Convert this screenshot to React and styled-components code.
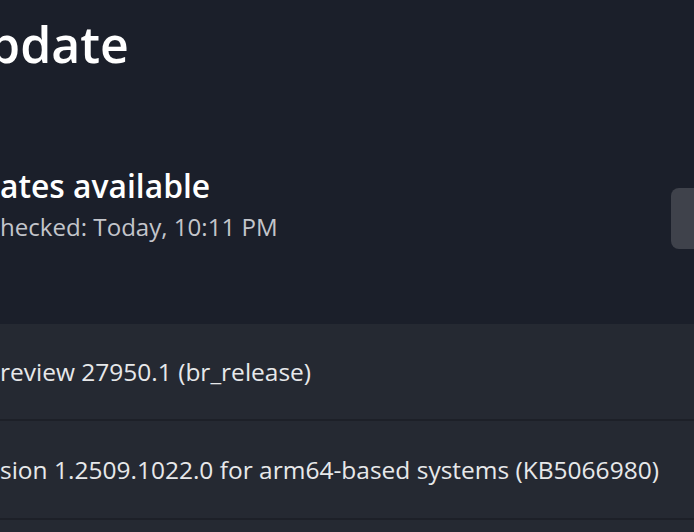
import React from "react";
import styled, { createGlobalStyle } from "styled-components";

const GlobalStyle = createGlobalStyle`
  html, body {
    margin: 0;
    padding: 0;
    background: #1b1f2a;
  }
  body {
    font-family: "Open Sans", "Noto Sans", sans-serif;
  }
`;

const Viewport = styled.div`
  width: 694px;
  height: 532px;
  overflow: hidden;
  background: #1b1f2a;
`;

const Window = styled.div`
  width: 860px;
  display: flex;
  flex-direction: column;
`;

const Title = styled.h1`
  margin: 0;
  padding-top: 14px;
  margin-left: -11px;
  font-size: 50px;
  line-height: 60px;
  font-weight: 600;
  color: #ffffff;
`;

const StatusRow = styled.section`
  display: flex;
  align-items: flex-start;
  justify-content: space-between;
  margin-top: 92px;
  padding-right: 29px;
`;

const Status = styled.div`
  display: flex;
  flex-direction: column;
  gap: 6px;
`;

const Heading = styled.h2`
  margin: 0;
  font-size: 31.8px;
  line-height: 40px;
  font-weight: 600;
  color: #ffffff;
`;

const Checked = styled.p`
  margin: 0;
  font-size: 24.1px;
  line-height: 30px;
  color: #c3c5cb;
`;

const CheckButton = styled.button`
  width: 160px;
  height: 61px;
  margin-top: 22px;
  border: none;
  border-radius: 8px;
  background: #3f424b;
`;

const UpdateList = styled.ul`
  list-style: none;
  margin: 75px 0 0;
  padding: 0;
  display: flex;
  flex-direction: column;
  gap: 2px;
  background: #1d2028;
`;

const UpdateRow = styled.li`
  height: ${(p) => p.$height}px;
  display: flex;
  align-items: center;
  background: #252932;
  font-size: 24.5px;
  color: #e7e8ea;
`;

const updates = [
  { name: "review 27950.1 (br_release)", height: 95 },
  { name: "sion 1.2509.1022.0 for arm64-based systems (KB5066980)", height: 97 },
  { name: "", height: 60 },
];

export default function App() {
  return (
    <>
      <GlobalStyle />
      <Viewport>
        <Window>
          <Title>pdate</Title>
          <StatusRow>
            <Status>
              <Heading>ates available</Heading>
              <Checked>hecked: Today, 10:11 PM</Checked>
            </Status>
            <CheckButton aria-label="Install all" />
          </StatusRow>
          <UpdateList>
            {updates.map((u, i) => (
              <UpdateRow key={i} $height={u.height}>
                {u.name}
              </UpdateRow>
            ))}
          </UpdateList>
        </Window>
      </Viewport>
    </>
  );
}
